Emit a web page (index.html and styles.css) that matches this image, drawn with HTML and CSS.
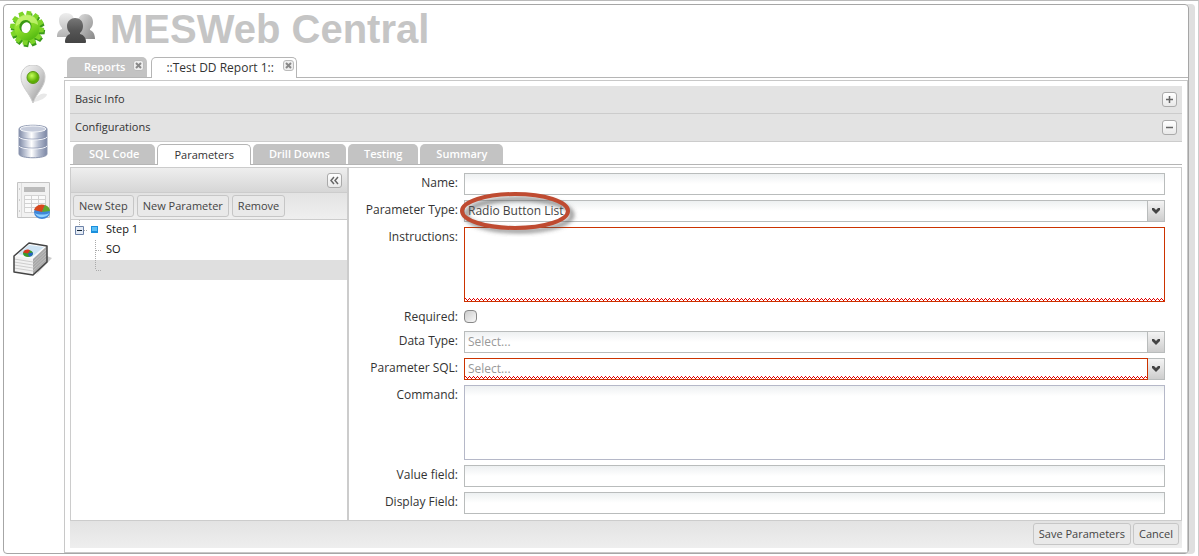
FILE: index.html
```html
<!DOCTYPE html>
<html lang="en">
<head>
<meta charset="utf-8">
<title>MESWeb Central</title>
<link rel="stylesheet" href="styles.css">
</head>
<body>
<div class="page">
<div class="frame">
  <header class="header">
    <svg class="gear" viewBox="0 0 44 42" aria-hidden="true">
      <defs>
        <linearGradient id="gearFill" x1="0" y1="0" x2=".6" y2="1"><stop offset="0" stop-color="#b4f04c"/><stop offset=".5" stop-color="#8fe02c"/><stop offset="1" stop-color="#56bb12"/></linearGradient>
        <g id="cog"><circle r="12.500"/><path id="t" d="M-3-11L-2.500-17H2L3-11Z M-3 11L-2 17H2.500L3 11Z"/><use href="#t" transform="rotate(30)"/><use href="#t" transform="rotate(60)"/><use href="#t" transform="rotate(90)"/><use href="#t" transform="rotate(120)"/><use href="#t" transform="rotate(150)"/></g>
      </defs>
      <g transform="translate(19 20)">
        <use href="#cog" transform="translate(1 2) rotate(8)" fill="#3b9a1a"/>
        <use href="#cog" transform="rotate(8)" fill="#7dd428"/>
        <circle r="12.500" fill="url(#gearFill)"/>
        <path d="M-11-2A11 11 0 0 1 11-3C6-7-6-6-11-2Z" fill="#d8fb90" opacity=".6"/>
        <ellipse cx="-2" cy="-1" rx="6" ry="6.500" fill="#3a9a12" transform="rotate(20)"/>
        <ellipse cx="-1" cy="0" rx="4.500" ry="5.500" fill="#fff" transform="rotate(20)"/>
      </g>
    </svg>
    <svg class="people" viewBox="0 0 40 34" aria-hidden="true">
      <defs>
        <linearGradient id="pLight" x1="0" y1="0" x2="0" y2="1"><stop offset="0" stop-color="#eee"/><stop offset="1" stop-color="#b2b2b2"/></linearGradient>
        <linearGradient id="pMid" x1="0" y1="0" x2="1" y2="1"><stop offset="0" stop-color="#ddd"/><stop offset="1" stop-color="#868686"/></linearGradient>
        <linearGradient id="pDark" x1="0" y1="0" x2="0" y2="1"><stop offset="0" stop-color="#777"/><stop offset=".5" stop-color="#555"/><stop offset="1" stop-color="#444"/></linearGradient>
      </defs>
      <path fill="url(#pLight)" d="M10 0c5 0 8 3 8 7 0 3-1 6-3 8v1c4 1 6 3 6 8H1c0-5 2-7 5-8v-1c-2-2-3-5-3-8 0-4 3-7 7-7z"/>
      <path fill="url(#pMid)" d="M29 1c5 0 8 3 8 8 0 3-1 5-3 7v1c3 1 5 4 5 9H21c0-5 2-8 4-9v-1c-2-2-3-4-3-7 0-5 3-8 7-8z"/>
      <path fill="url(#pDark)" d="M19 5c5 0 8 3 8 8 0 3-1 5-3 7v1c4 1 6 4 6 8 0 1-1 1-2 1H11c-1 0-2 0-2-1 0-4 2-7 5-8v-1c-2-2-3-4-3-7 0-5 4-8 8-8z"/>
    </svg>
    <h1 class="title">MESWeb Central</h1>
  </header>
  <div class="body">
    <nav class="sidebar" aria-label="Modules">
      <svg class="side-icon" viewBox="0 0 44 40" aria-hidden="true">
        <defs>
          <linearGradient id="pin" x1="0" x2="1" y1="0" y2="1"><stop offset="0" stop-color="#fafafa"/><stop offset=".5" stop-color="#d0d0d0"/><stop offset="1" stop-color="#8d8d8d"/></linearGradient>
          <radialGradient id="dot" cx="40%" cy="35%"><stop offset="0" stop-color="#c6ff5a"/><stop offset="1" stop-color="#5cae04"/></radialGradient>
        </defs>
        <path d="M26 36C29 30 34 27 39 29 39 33 31 36 26 37Z" fill="#e8e8e8"/>
        <path d="M25 0c8 0 12 6 12 12 0 10-8 15-12 26C21 27 13 22 13 12 13 6 17 0 25 0z" fill="url(#pin)" stroke="#ccc"/>
        <circle cx="25" cy="12.500" r="6" fill="url(#dot)" stroke="#5c9a16"/>
      </svg>
      <svg class="side-icon" viewBox="0 0 44 40" aria-hidden="true">
        <defs><linearGradient id="db"><stop offset="0" stop-color="#7f8aa6"/><stop offset=".25" stop-color="#c5cbda"/><stop offset=".45" stop-color="#fff"/><stop offset=".7" stop-color="#b4bccf"/><stop offset="1" stop-color="#7c87a5"/></linearGradient></defs>
        <path d="M11 6c0-5 28-5 28 0v25c0 5-28 5-28 0z" fill="url(#db)" stroke="#8d97b0"/>
        <ellipse cx="25" cy="6" rx="13" ry="3" fill="#c6ccdb" stroke="#f2f4f8"/>
        <path d="M11 14c2 4 26 4 28 0M11 23c2 4 26 4 28 0" fill="none" stroke="#f4f6fa"/>
        <path d="M11 13c2 4 26 4 28 0M11 22c2 4 26 4 28 0" fill="none" stroke="#8791ac" stroke-width=".6"/>
      </svg>
      <svg class="side-icon" viewBox="0 0 44 40" aria-hidden="true">
        <path d="M9.500 1.500h32v35h-32z" fill="#f1f1f1" stroke="#c4c4c4"/><path d="M13.500 2v34" stroke="#ddd"/>
        <path d="M11 8h1M11 19h1M11 30h1" stroke="#aaa"/>
        <path d="M16 6h21v5H16z" fill="#bbb"/>
        <path d="M16.500 14.500h21v17h-21zM16.500 18.500h21M16.500 22.500h21M16.500 26.500h21M23.500 14v17M30.500 14v17" fill="#fafafa" stroke="#d2d2d2"/>
        <ellipse cx="34" cy="31" rx="8" ry="7" fill="#3f86d8"/><path d="M34 31L26 29A8 7 0 0 1 37 24Z" fill="#d8481c"/><path d="M34 31L37 24A8 7 0 0 1 42 30Z" fill="#5fa82d"/>
        <path d="M27 32c2 2 12 2 14 0-1 5-12 6-14 0z" fill="#8fd2ff"/>
      </svg>
      <svg class="side-icon" viewBox="0 0 44 40" aria-hidden="true">
        <path d="M28 36L44 19l-5-2z" fill="#ccc"/>
        <path d="M6 17L21 4l18 3v16L25 36 6 33z" fill="#fafafa"/>
        <path d="M6 17l19 3v16L6 33z" fill="#f2f2f2"/><path d="M25 20L39 7v16L25 36z" fill="#a8a8a8"/>
        <path d="M6 20l19 3 14-13M6 23l19 3 14-13M6 26l19 3 14-13M6 29l19 3 14-13" fill="none" stroke="#c4c4c4" stroke-width=".8"/>
        <path d="M10 15L21 6l15 2-12 10z" fill="#cfe4f4"/>
        <ellipse cx="20" cy="14.500" rx="5" ry="3.500" fill="#3a9a2c"/><path d="M20 14.500l-5-1c2-4 6-3 7-2z" fill="#d7391e"/><path d="M20 14.500l5-1c0 3-2 4-4 4z" fill="#2563c4"/>
        <path d="M6 17L21 4l18 3v16L25 36 6 33z" fill="none" stroke="#444" stroke-width="1.500" stroke-linejoin="round"/>
      </svg>
    </nav>
    <main class="main">
      <div class="tabs outer" role="tablist">
        <button class="tab" role="tab">Reports</button>
        <button class="close" aria-label="Close Reports"><svg viewBox="0 0 9 9"><path d="M2 2l5 5M7 2L2 7"/></svg></button>
        <button class="tab active" role="tab" aria-selected="true">::Test DD Report 1::</button>
        <button class="close" aria-label="Close Test DD Report 1"><svg viewBox="0 0 9 9"><path d="M2 2l5 5M7 2L2 7"/></svg></button>
      </div>
      <div class="content">
        <div class="bar"><span>Basic Info</span><button class="tool" aria-label="Expand"><svg viewBox="0 0 13 13"><path d="M3 6.500h7M6.500 3v7"/></svg></button></div>
        <div class="bar"><span>Configurations</span><button class="tool" aria-label="Collapse"><svg viewBox="0 0 13 13"><path d="M3 6.500h7"/></svg></button></div>
        <div class="tabs inner" role="tablist">
          <button class="tab" role="tab">SQL Code</button>
          <button class="tab active" role="tab" aria-selected="true">Parameters</button>
          <button class="tab" role="tab">Drill Downs</button>
          <button class="tab" role="tab">Testing</button>
          <button class="tab" role="tab">Summary</button>
        </div>
        <div class="panel">
          <section class="steps">
            <div class="steps-head"><button class="tool" aria-label="Collapse panel"><svg viewBox="0 0 13 13"><path d="M6 3L3 6.500 6 10M10 3L7 6.500 10 10"/></svg></button></div>
            <div class="toolbar">
              <button class="btn">New Step</button>
              <button class="btn">New Parameter</button>
              <button class="btn">Remove</button>
            </div>
            <ul class="tree">
              <li class="node">
                <svg class="branch" viewBox="0 0 31 20" aria-hidden="true"><path class="dots" d="M8.500 0v6M13 10.500h3"/><path d="M4.500 6.500h8v8h-8z" fill="#e4ebf5" stroke="#6d83a8"/><path d="M6 10.500h5" stroke="#123"/><path d="M20 6h7v7h-7z" fill="#1b8fdc"/><path d="M21 7h5v4h-5z" fill="#5cc0f7"/></svg>
                <span>Step 1</span>
              </li>
              <li class="node">
                <svg class="branch" viewBox="0 0 31 20" aria-hidden="true"><path class="dots" d="M24.500 0v20M25 10.500h6"/></svg>
                <span>SO</span>
              </li>
              <li class="node selected">
                <svg class="branch" viewBox="0 0 31 20" aria-hidden="true"><path class="dots" d="M24.500 0v10M25 10.500h6"/></svg>
              </li>
            </ul>
          </section>
          <form class="form">
            <label for="name">Name:</label>
            <input class="field" id="name" type="text">
            <label for="ptype">Parameter Type:</label>
            <div class="combo">
              <select class="field" id="ptype"><option>Radio Button List</option></select>
              <button class="trigger" type="button" tabindex="-1" aria-label="Open list"><svg viewBox="0 0 16 20"><path d="M4 7h2l2 2 2-2h2v2l-4 4-4-4z"/></svg></button>
              <svg class="ring" viewBox="0 0 124 48" aria-hidden="true">
                <defs><filter id="soft" x="-20%" y="-20%" width="140%" height="150%"><feGaussianBlur stdDeviation="2"/></filter></defs>
                <ellipse cx="61" cy="26" rx="53" ry="16" fill="none" stroke="#555" stroke-opacity=".7" stroke-width="4" filter="url(#soft)"/>
                <ellipse cx="57" cy="22" rx="53" ry="17" fill="none" stroke="#bf4b31" stroke-width="4"/>
              </svg>
            </div>
            <label for="instr">Instructions:</label>
            <textarea class="field area invalid" id="instr"></textarea>
            <label for="req">Required:</label>
            <div class="check"><input id="req" type="checkbox"></div>
            <label for="dtype">Data Type:</label>
            <div class="combo">
              <select class="field empty" id="dtype"><option>Select...</option></select>
              <button class="trigger" type="button" tabindex="-1" aria-label="Open list"><svg viewBox="0 0 16 20"><path d="M4 7h2l2 2 2-2h2v2l-4 4-4-4z"/></svg></button>
            </div>
            <label for="psql">Parameter SQL:</label>
            <div class="combo">
              <select class="field empty invalid" id="psql"><option>Select...</option></select>
              <button class="trigger" type="button" tabindex="-1" aria-label="Open list"><svg viewBox="0 0 16 20"><path d="M4 7h2l2 2 2-2h2v2l-4 4-4-4z"/></svg></button>
            </div>
            <label for="cmd">Command:</label>
            <textarea class="field area" id="cmd"></textarea>
            <label for="vfield">Value field:</label>
            <input class="field" id="vfield" type="text">
            <label for="dfield">Display Field:</label>
            <input class="field" id="dfield" type="text">
          </form>
        </div>
        <footer class="footer">
          <button class="btn">Save Parameters</button>
          <button class="btn">Cancel</button>
        </footer>
      </div>
    </main>
  </div>
</div>
</div>
</body>
</html>
```
FILE: styles.css
```css
* { box-sizing: border-box; }
body {
  margin: 0;
  background: #fff;
  color: #333;
  font: 11px/20px "Open Sans", "Noto Sans", sans-serif;
}
button, input, select, textarea { font: inherit; color: inherit; margin: 0; }
button { padding: 0; cursor: pointer; }
svg { display: block; flex: none; }

.page {
  min-height: 100vh;
  padding: 3px 3px 2px;
  border-top: 1px solid #bbb;
  border-right: 1px solid #ccc;
}
.frame {
  border: 1px solid #a6a6a6;
  border-radius: 4px;
  box-shadow: 6px 0 #dfdfdf;
  margin-right: 6px;
}
.header { display: flex; height: 52px; padding: 3px 0 0 4px; }
.gear { width: 44px; height: 42px; }
.people { width: 40px; height: 34px; margin: 5px 0 0 4px; }
.title {
  margin: 0 0 0 14px;
  font: bold 40px/42px "Liberation Sans", sans-serif;
  color: #c5c5c5;
}
.body { display: grid; grid-template-columns: 60px minmax(0, 1fr); }
.sidebar { display: flex; flex-direction: column; gap: 18px; padding: 8px 0 0 4px; }
.side-icon { width: 44px; height: 40px; }

.tabs { display: flex; align-items: flex-end; height: 21px; border-bottom: 1px solid #b5b5b5; padding-left: 3px; }
.tab {
  height: 20px;
  padding: 0 16px;
  margin-right: 2px;
  border: 0;
  border-radius: 5px 5px 0 0;
  background: #c3c3c3;
  color: #fff;
  font-weight: 600;
}
.tab.active {
  height: 21px;
  margin-bottom: -1px;
  border: 1px solid #b5b5b5;
  border-bottom: 0;
  background: #fff;
  color: #333;
  font-weight: normal;
}
.outer .tab { padding: 0 22px 0 17px; margin-right: 0; }
.outer .tab.active { padding: 0 22px 0 14px; font-size: 12px; }
.close {
  align-self: flex-start;
  width: 11px;
  height: 11px;
  margin: 3px 7px 0 -14px;
  border: 1px solid #bbb;
  border-radius: 3px;
  background: #eee;
  z-index: 1;
}
.close svg { width: 9px; height: 9px; fill: none; stroke: #888; stroke-width: 2; }

.content { margin-top: 2px; padding: 5px 5px 4px; border: 1px solid #c8c8c8; }
.bar {
  display: flex;
  align-items: center;
  justify-content: space-between;
  height: 28px;
  padding: 0 5px;
  background: #e3e3e3;
  border-bottom: 1px solid #ccc;
  line-height: 18px;
}
.bar span { height: 20px; }
.tool {
  width: 15px;
  height: 15px;
  border: 1px solid #aaa;
  border-radius: 3px;
  background: linear-gradient(#fff, #e9e9e9);
}
.tool svg { width: 13px; height: 13px; fill: none; stroke: #666; stroke-width: 1.5; }
.inner { height: 23px; }

.panel {
  display: grid;
  grid-template-columns: 278px minmax(0, 1fr);
  margin-top: 2px;
  border: 1px solid #ccc;
}
.steps { border-right: 2px solid #ccc; }
.steps-head {
  display: flex;
  justify-content: flex-end;
  align-items: center;
  height: 25px;
  padding-right: 5px;
  background: linear-gradient(#eee, #d6d6d6);
  border-bottom: 1px solid #ccc;
}
.toolbar {
  display: flex;
  gap: 3px;
  padding: 2px;
  background: linear-gradient(#e3e3e3, #efefef);
  border-bottom: 1px solid #ccc;
}
.btn {
  height: 22px;
  padding: 0 5px;
  border: 1px solid #c6c6c6;
  border-radius: 3px;
  background: #e9e9e9;
  color: #444;
}
.tree { margin: 0; padding: 0; list-style: none; color: #111; }
.node { display: flex; gap: 4px; height: 20px; line-height: 18px; }
.node.selected { background: #dfdfdf; }
.branch { width: 31px; height: 20px; }
.dots { stroke: #aaa; stroke-dasharray: 1 1; fill: none; }

.form {
  display: grid;
  grid-template-columns: 109px minmax(0, 1fr);
  gap: 5px 6px;
  align-items: start;
  padding: 5px 16px 6px 0;
  font-size: 12px;
}
.form label { height: 19px; text-align: right; white-space: nowrap; }
.field {
  display: block;
  width: 100%;
  height: 22px;
  padding: 0 3px;
  border: 1px solid #b9bcbc;
  border-radius: 0;
  background: linear-gradient(#edf0f1, #fff 10px);
  appearance: none;
  outline: 0;
  color: #444;
}
.area { height: 75px; resize: none; border-color: #b5b8c8; }
.empty { color: #999; }
.invalid {
  border-color: #c30;
  background: #fff url("data:image/svg+xml,%3Csvg xmlns='http://www.w3.org/2000/svg' width='4' height='3' shape-rendering='crispEdges'%3E%3Cpath d='M0 0h1v1H0zM1 1h1v1H1zM3 1h1v1H3zM2 2h1v1H2z' fill='%23e00000'/%3E%3C/svg%3E") repeat-x left bottom;
}
.combo { position: relative; display: flex; }
.combo .field { flex: 1; }
.trigger {
  width: 17px;
  height: 22px;
  border: 1px solid #b9bcbc;
  border-left: 0;
  background: linear-gradient(#f4f4f4, #cdcdcd);
}
.trigger svg { width: 16px; height: 20px; fill: #444; }
.ring { position: absolute; left: -6px; top: -11px; width: 124px; height: 48px; pointer-events: none; }
.check { display: flex; align-items: center; height: 19px; }
.check input {
  appearance: none;
  width: 13px;
  height: 13px;
  border: 1px solid #888;
  border-radius: 4px;
  background: linear-gradient(135deg, #ccc, #f8f8f8);
}

.footer {
  display: flex;
  justify-content: flex-end;
  gap: 2px;
  padding: 2px 3px 3px;
  background: linear-gradient(#e3e3e3, #eee);
}
```
